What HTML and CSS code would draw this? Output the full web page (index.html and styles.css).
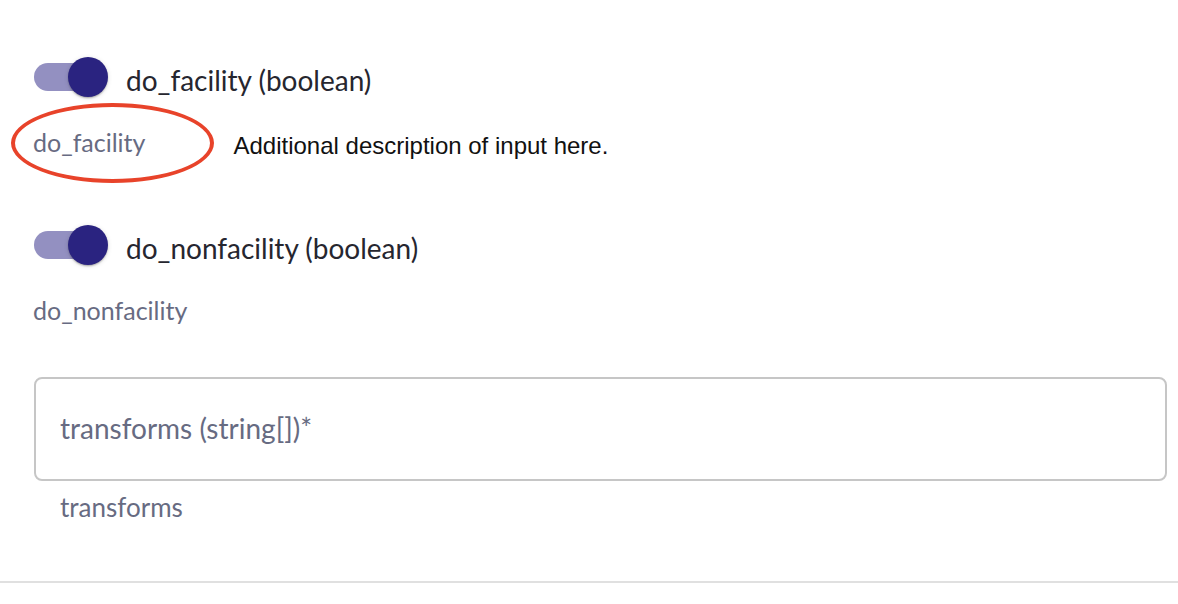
FILE: index.html
```html
<!DOCTYPE html>
<html>
<head>
<meta charset="utf-8">
<link rel="stylesheet" href="styles.css">
</head>
<body>
<div class="form">
  <div class="field">
    <div class="switch-row">
      <span class="switch"><span class="track"></span><span class="thumb"></span></span>
      <span class="switch-label">do_facility (boolean)</span>
    </div>
    <div class="helper-row">
      <span class="helper circled">do_facility<span class="ring"></span></span>
      <span class="note">Additional description of input here.</span>
    </div>
  </div>
  <div class="field field-2">
    <div class="switch-row">
      <span class="switch"><span class="track"></span><span class="thumb"></span></span>
      <span class="switch-label">do_nonfacility (boolean)</span>
    </div>
    <div class="helper-row">
      <span class="helper">do_nonfacility</span>
    </div>
  </div>
  <div class="textfield">
    <div class="tf-box"><span class="tf-label">transforms (string[])*</span></div>
    <div class="tf-helper">transforms</div>
  </div>
</div>
<div class="divider"></div>
</body>
</html>
```
FILE: styles.css
```css
html, body {
  margin: 0;
  padding: 0;
  background: #ffffff;
  font-family: Lato, "Noto Sans", sans-serif;
}
.form {
  padding: 57px 11px 0 34px;
}
.field {
  display: flex;
  flex-direction: column;
}
.field-2 {
  margin-top: 69px;
}
.switch-row {
  display: flex;
  align-items: center;
  height: 40px;
}
.switch {
  position: relative;
  width: 74px;
  height: 40px;
  flex: none;
}
.track {
  position: absolute;
  left: 0;
  top: 6px;
  width: 68px;
  height: 28px;
  border-radius: 14px;
  background: #9390c1;
}
.thumb {
  position: absolute;
  left: 34px;
  top: 0;
  width: 40px;
  height: 40px;
  border-radius: 50%;
  background: #2a2380;
  box-shadow: 0 2px 2px -1px rgba(0,0,0,0.2), 0 1px 2px 0 rgba(0,0,0,0.14), 0 1px 5px 0 rgba(0,0,0,0.12);
}
.switch-label {
  margin-left: 18px;
  font-size: 28px;
  color: #26262f;
  line-height: 32px;
  padding-top: 6px;
}
.helper-row {
  display: flex;
  align-items: center;
  margin-top: 31px;
  height: 28px;
}
.helper {
  position: relative;
  font-size: 25px;
  color: #676b82;
  line-height: 28px;
  margin-left: -1px;
}
.ring {
  position: absolute;
  left: -22px;
  top: -25px;
  width: 203px;
  height: 80px;
  box-sizing: border-box;
  border: 4px solid #e8432a;
  border-radius: 50%;
}
.note {
  margin-left: 88px;
  margin-top: 8px;
  font-family: "Liberation Sans", Arial, sans-serif;
  font-size: 24px;
  color: #111111;
}
.textfield {
  margin-top: 53px;
}
.tf-box {
  height: 104px;
  box-sizing: border-box;
  border: 2px solid #c6c6c6;
  border-radius: 8px;
  display: flex;
  align-items: center;
  padding-left: 24px;
}
.tf-label {
  font-size: 28px;
  color: #676b82;
  padding-bottom: 2px;
}
.tf-helper {
  margin-top: 12px;
  padding-left: 26px;
  font-size: 26px;
  color: #676b82;
  line-height: 28px;
}
.divider {
  margin-top: 60px;
  height: 2px;
  background: #e0e0e0;
}
```
